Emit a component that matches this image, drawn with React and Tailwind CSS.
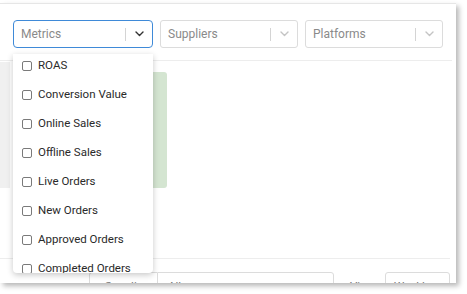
const METRICS = [
  "ROAS",
  "Conversion Value",
  "Online Sales",
  "Offline Sales",
  "Live Orders",
  "New Orders",
  "Approved Orders",
  "Completed Orders",
  "Cancelled Orders",
];

function Chevron({ className }) {
  return (
    <svg width="9" height="6" viewBox="0 0 9 6" className={className} fill="none">
      <path d="M1 1l3.5 3.5L8 1" stroke="currentColor" strokeWidth="1.4" strokeLinecap="round" strokeLinejoin="round" />
    </svg>
  );
}

function Select({ label, active, width }) {
  return (
    <div
      className={
        active
          ? "flex h-[28px] items-center rounded-[4px] border-[1.5px] border-[#3f8ad8] bg-white"
          : "flex h-[28px] items-center rounded-[3px] border border-[#dcdcdc] bg-white"
      }
      style={{ width }}
    >
      <span className="flex-1 pl-[7px] text-[12px] text-[#8a8a8a]">{label}</span>
      <span className="h-[13px] w-px bg-[#d4d4d4]" />
      <span className="flex w-[26px] justify-center">
        <Chevron className={active ? "text-[#333]" : "text-[#c4c4c4]"} />
      </span>
    </div>
  );
}

function MetricsMenu() {
  return (
    <div className="absolute left-[13px] top-[50px] h-[219px] w-[140px] overflow-hidden rounded-b-[4px] bg-white shadow-[0_2px_6px_rgba(0,0,0,0.22)]">
      <div className="-mt-[3px]">
        {METRICS.map((m) => (
          <div key={m} className="flex h-[29px] items-center gap-[6px] pl-[9px]">
            <span className="h-[10px] w-[10px] rounded-[2px] border border-[#7a7a7a] bg-white" />
            <span className="text-[11.5px] text-[#2a2a2a]">{m}</span>
          </div>
        ))}
      </div>
    </div>
  );
}

export default function App() {
  return (
    <div className="relative h-[294px] w-[467px] overflow-hidden bg-white font-['Roboto',sans-serif]">
      <div className="relative mt-[3px] h-[280px] w-[456px] overflow-hidden border-t border-[#e6e6e6] bg-white shadow-[3px_3px_5px_rgba(0,0,0,0.28)]">
        {/* filters */}
        <div className="flex gap-[7px] px-[13px] pb-[12px] pt-[16px]">
          <Select label="Metrics" active width={140} />
          <Select label="Suppliers" width={138} />
          <Select label="Platforms" width={138} />
        </div>
        <div className="mr-[4px] h-px bg-[#ededed]" />

        {/* chart */}
        <div className="flex h-[197px] items-start">
          <div className="mt-[1px] h-[126px] w-[10px] bg-[#f0f0f0]" />
          <div className="ml-[90px] mt-[11px] h-[116px] w-[67px] rounded-[3px] bg-[#d4e5d1]" />
        </div>
        <div className="mr-[6px] h-px bg-[#ededed]" />

        {/* footer */}
        <div className="flex items-start pl-[89px] pt-[13px] text-[11.5px] text-[#777]">
          <div className="h-[24px] w-[68px] rounded-l-[3px] border border-r-0 border-[#dcdcdc] pl-[15px] pt-[5px]">
            Supplier
          </div>
          <div className="h-[24px] w-[177px] rounded-r-[3px] border border-[#dcdcdc] pl-[10px] pt-[5px]">All</div>
          <div className="ml-[16px] w-[35px] pt-[6px]">View</div>
          <div className="h-[24px] w-[65px] rounded-[3px] border border-[#dcdcdc] pl-[8px] pt-[5px]">Weekly</div>
        </div>

        <MetricsMenu />
      </div>
    </div>
  );
}
